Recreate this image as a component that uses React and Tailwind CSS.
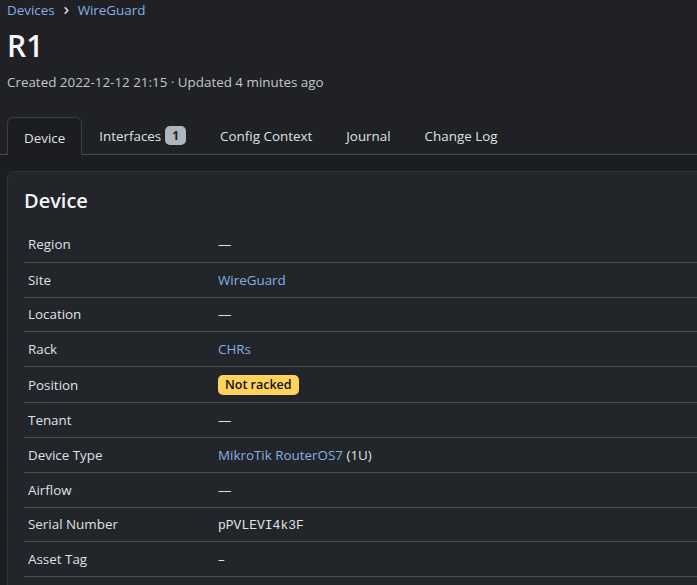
import { ChevronRight } from 'lucide-react';

const ROWS = [
  { label: 'Region', value: <span>—</span> },
  { label: 'Site', value: <a className="text-[#86b0e6]">WireGuard</a> },
  { label: 'Location', value: <span>—</span> },
  { label: 'Rack', value: <a className="text-[#86b0e6]">CHRs</a> },
  {
    label: 'Position',
    tall: true,
    value: (
      <span className="inline-block rounded-[5px] bg-[#ffd25c] px-[7px] py-[2px] text-[12.5px] font-semibold leading-[16px] text-[#111]">
        Not racked
      </span>
    ),
  },
  { label: 'Tenant', value: <span>—</span> },
  {
    label: 'Device Type',
    value: (
      <span>
        <a className="text-[#86b0e6]">MikroTik RouterOS7</a> (1U)
      </span>
    ),
  },
  { label: 'Airflow', value: <span>—</span> },
  {
    label: 'Serial Number',
    value: <span className="font-['Liberation_Mono',monospace] text-[13px]">pPVLEVI4k3F</span>,
  },
  { label: 'Asset Tag', value: <span>–</span> },
  { label: '', value: null },
];

const TABS = [
  { label: 'Device', active: true },
  { label: 'Interfaces', badge: '1' },
  { label: 'Config Context' },
  { label: 'Journal' },
  { label: 'Change Log' },
];

export default function App() {
  return (
    <div className="h-[585px] overflow-hidden bg-[#1f2124] font-['Open_Sans',sans-serif] text-[13.4px] text-[#dee2e6]">
      {/* Header */}
      <div className="px-[7px]">
        <div className="flex items-center gap-[6px] leading-[20px] text-[#86b0e6]">
          <a>Devices</a>
          <ChevronRight size={11} strokeWidth={3.5} className="text-[#dee2e6]" />
          <a>WireGuard</a>
        </div>
        <h1 className="mt-[8px] text-[30px] font-semibold leading-[36px] text-[#f4f5f6]">R1</h1>
        <div className="mt-[8px] leading-[20px] text-[#c3c7cb]">
          Created 2022-12-12 21:15 · Updated 4 minutes ago
        </div>
      </div>

      {/* Tabs */}
      <div className="mt-[25px] flex border-b border-[#494d52] pl-[7px]">
        {TABS.map((t) =>
          t.active ? (
            <div
              key={t.label}
              className="-mb-px flex h-[38px] items-center rounded-t-[6px] border border-b-0 border-[#3a3e43] bg-[#1b1d20] px-[16px] pt-[3px]"
            >
              {t.label}
            </div>
          ) : (
            <div key={t.label} className="flex h-[37px] items-center gap-[3px] px-[17px] pt-[2px]">
              {t.label}
              {t.badge && (
                <span className="ml-[1px] -mt-[2px] rounded-[5px] bg-[#adb5bd] px-[7px] py-[1px] text-[12px] font-bold leading-[17px] text-[#1f2124]">
                  {t.badge}
                </span>
              )}
            </div>
          )
        )}
      </div>

      {/* Tab content */}
      <div className="h-full bg-[#1b1d20] pl-[7px] pt-[16px]">
        <div className="-mr-6 rounded-[6px] border border-[#2f3337] bg-[#222529] px-[16px] pb-[40px] pt-[15px]">
          <h2 className="text-[20px] font-semibold leading-[28px] text-[#f1f3f5]">Device</h2>
          <div className="mt-[12px]">
            {ROWS.map((r, i) => (
              <div
                key={i}
                className={`flex items-center ${r.tall ? 'h-[36px]' : 'h-[34.8px]'} ${i > 0 ? 'border-t border-[#4a4e53]' : ''}`}
              >
                <div className="w-[194px] pl-[4px]">{r.label}</div>
                <div>{r.value}</div>
              </div>
            ))}
          </div>
        </div>
      </div>
    </div>
  );
}
